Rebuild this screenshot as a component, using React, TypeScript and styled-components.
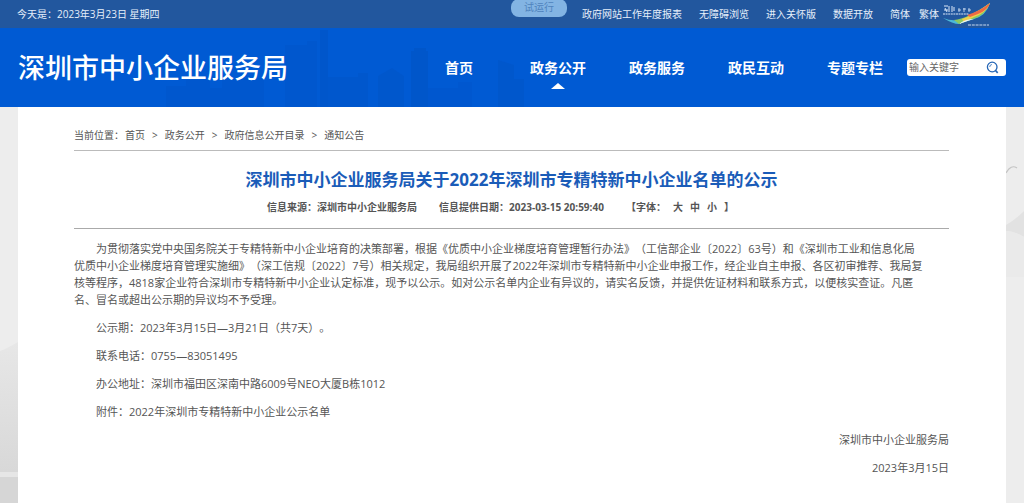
import React from "react";
import styled, { createGlobalStyle } from "styled-components";

const GlobalStyle = createGlobalStyle`
  * { box-sizing: border-box; }
  body {
    margin: 0;
    background: #ededed;
    color: #555;
    font-family: "Open Sans", "Noto Sans CJK SC", sans-serif;
    font-size: 11px;
    line-height: 17px;
    text-spacing-trim: space-all;
  }
  a { color: inherit; text-decoration: none; }
  p, h1 { margin: 0; }
`;

const Page = styled.div`
  display: flex;
  flex-direction: column;
  min-height: 100vh;
`;

const TopBar = styled.div`
  display: flex;
  align-items: center;
  justify-content: space-between;
  height: 28px;
  padding: 0 33px 0 17px;
  background: #22579e;
  color: #e6effa;
  font-size: 10px;
  white-space: nowrap;
`;

const TopLinks = styled.nav`
  display: flex;
  align-items: center;
  gap: 17px;
`;

const TrialBadge = styled.span`
  align-self: flex-start;
  height: 18px;
  width: 56px;
  margin: -3px -2px 0 0;
  border-radius: 8px;
  background: #83b4e3;
  color: #4f83bd;
  text-align: center;
`;

const LangLinks = styled.div`
  display: flex;
  align-items: center;
  gap: 9px;
`;

const CityLogo = styled.svg`
  display: block;
  width: 49px;
  height: 24px;
  margin-left: -6px;
`;

const Header = styled.header`
  position: relative;
  display: flex;
  align-items: center;
  justify-content: space-between;
  height: 79px;
  padding: 0 18px;
  background: #005ad3;
  color: #fff;
  white-space: nowrap;
`;

const Skyline = styled.svg`
  position: absolute;
  left: 160px;
  bottom: 0;
  width: 410px;
  height: 79px;
`;

const SiteName = styled.a`
  position: relative;
  font-size: 27px;
  font-weight: 500;
  line-height: 40px;
`;

const HeaderRight = styled.div`
  position: relative;
  display: flex;
  align-items: center;
  gap: 24px;
`;

const MainNav = styled.nav`
  display: flex;
  gap: 43px;
`;

const NavLink = styled.a<{ $active?: boolean }>`
  position: relative;
  min-width: 56px;
  text-align: center;
  font-size: 14px;
  font-weight: 700;
  line-height: 20px;

  &::after {
    content: "";
    display: ${(p) => (p.$active ? "block" : "none")};
    position: absolute;
    left: 50%;
    top: 25px;
    margin-left: -7px;
    border: solid transparent;
    border-width: 0 7px 6px;
    border-bottom-color: #fff;
  }
`;

const SearchBox = styled.form`
  display: flex;
  align-items: center;
  width: 99px;
  height: 17px;
  border-radius: 3px;
  background: #fff;
`;

const SearchInput = styled.input`
  flex: 1;
  min-width: 0;
  height: 17px;
  padding: 0 0 0 2px;
  border: 0;
  outline: 0;
  background: transparent;
  color: #555;
  font: inherit;
  font-size: 10px;

  &::placeholder { color: #666; opacity: 1; }
`;

const SearchButton = styled.button`
  display: flex;
  align-items: center;
  justify-content: center;
  width: 28px;
  height: 17px;
  padding: 0;
  border: 0;
  background: transparent;
`;

const Body = styled.div`
  display: grid;
  grid-template-columns: 18px minmax(0, 1fr) 18px;
  flex: 1;
`;

const Gutter = styled.svg`
  display: block;
  width: 18px;
  height: 396px;
`;

const Panel = styled.main`
  padding: 20px 57px 18px 56px;
  background: #fff;
`;

const Breadcrumb = styled.nav`
  display: flex;
  gap: 7px;
  padding-bottom: 6px;
  border-bottom: 1px solid #bbb;
  font-size: 10px;
`;

const CrumbLabel = styled.span`
  margin-right: -6px;
`;

const ArticleHead = styled.header`
  padding: 17px 0 12px;
  border-bottom: 1px solid #aaa;
`;

const Title = styled.h1`
  color: #1a5cb8;
  font-size: 17px;
  font-weight: 700;
  line-height: 24px;
  text-align: center;
`;

const Meta = styled.div`
  display: flex;
  justify-content: center;
  gap: 22px;
  padding: 7px 22px 0 0;
  font-size: 10px;
  font-weight: 700;
`;

const FontSizes = styled.span`
  display: flex;
  gap: 7px;
`;

const SizeButton = styled.button`
  padding: 0;
  border: 0;
  background: transparent;
  color: inherit;
  font: inherit;
`;

const Article = styled.article`
  display: flex;
  flex-direction: column;
  gap: 11px;
  padding-top: 11px;
`;

const Paragraph = styled.p`
  text-indent: 2em;
`;

const Signature = styled.p`
  text-align: right;
`;

const NAV = ["首页", "政务公开", "政务服务", "政民互动", "专题专栏"];
const TOP_LINKS = ["政府网站工作年度报表", "无障碍浏览", "进入关怀版", "数据开放"];
const CRUMBS = ["首页", "政务公开", "政府信息公开目录", "通知公告"];

export default function App() {
  return (
    <Page>
      <GlobalStyle />
      <TopBar>
        <span>今天是：2023年3月23日 星期四</span>
        <TopLinks>
          <TrialBadge>试运行</TrialBadge>
          {TOP_LINKS.map((t) => (
            <a href="#" key={t}>{t}</a>
          ))}
          <LangLinks>
            <a href="#">简体</a>
            <a href="#">繁体</a>
            <a href="#" aria-label="深圳政府在线">
              <CityLogo viewBox="0 0 49 24" aria-hidden="true">
                <path d="M1 16 Q11 20 20 17 Q29 14 48 1 Q44 14 32 17 Q25 19 17 22 Q11 22 1 16Z" fill="#4bb9d8" />
                <path d="M12 18 Q25 17 48 1 Q43 14 31 17 L17 22Z" fill="#8cc861" />
                <path d="M20 17 Q32 13 48 1 Q44 11 32 15 L22 20Z" fill="#f2cf4a" />
                <path d="M25 13 Q38 9 48 1 Q46 8 36 12 L28 15Z" fill="#ee6a45" />
                <path d="M17 22 Q23 17 32 17 Q25 19 17 22Z" fill="#e8f3ff" />
                <g stroke="#dbe8f8" fill="none">
                  <path d="M2 4h4M3 6l2 4M7 4v6M10 4v6M12 5v4M2 8h4" />
                  <path d="M16 8h3M17 6v4M21 7h3M22 6v4M26 8h3M27 6v4" strokeWidth="0.8" />
                  <path d="M1 12h26" strokeDasharray="2 0.6" />
                  <path d="M26 23h21" strokeWidth="0.9" strokeDasharray="3 0.8" />
                </g>
              </CityLogo>
            </a>
          </LangLinks>
        </TopLinks>
      </TopBar>

      <Header>
        <Skyline viewBox="0 0 410 79" aria-hidden="true">
          <g fill="#0054c6">
            <path d="M6 79V58h20V52h24v8h12V50h42v29Z" opacity=".35" />
            <path d="M125 79V17h22v-4h10v66Z" opacity=".35" />
            <path d="M160 79V2h8v77Z" opacity=".6" />
            <path d="M168 79V49h30v-4h10v34Z" opacity=".45" />
            <path d="M218 79V48l14-8 12 8v31Z" opacity=".5" />
            <path d="M251 79V23h3v-3h12v3h2v56Z" opacity=".7" />
            <path d="M268 79V60h30v-6h14v25Z" opacity=".3" />
            <path d="M338 79V32l16 5v14h10v28Z" opacity=".5" />
          </g>
        </Skyline>
        <SiteName href="#">深圳市中小企业服务局</SiteName>
        <HeaderRight>
          <MainNav>
            {NAV.map((t) => (
              <NavLink href="#" key={t} $active={t === "政务公开"}>{t}</NavLink>
            ))}
          </MainNav>
          <SearchBox onSubmit={(e) => e.preventDefault()}>
            <SearchInput type="text" placeholder="输入关键字" aria-label="输入关键字" />
            <SearchButton type="submit" aria-label="搜索">
              <svg width="13" height="13" viewBox="0 0 13 13" fill="none" stroke="#2465b5">
                <circle cx="6.2" cy="6" r="4.8" strokeWidth="1.3" />
                <path d="M9.5 9.5l2.2 2.3" strokeWidth="1.7" />
                <path d="M3.7 6a2.5 2.5 0 0 1 2.2-2.5" strokeWidth=".8" />
              </svg>
            </SearchButton>
          </SearchBox>
        </HeaderRight>
      </Header>

      <Body>
        <Gutter viewBox="0 0 18 396" aria-hidden="true">
          <defs>
            <linearGradient id="hill" x1="0" y1="0" x2="0" y2="1">
              <stop offset="0" stopColor="#e7e7e7" />
              <stop offset="1" stopColor="#d8d8d8" />
            </linearGradient>
          </defs>
          <path d="M0 244Q6 242 18 235V365H0Z" fill="url(#hill)" />
          <path d="M0 365h18v5H0Z" fill="#e6e6e6" />
          <path d="M0 370h18v26H0Z" fill="#d6d6d6" />
        </Gutter>
        <Panel>
          <Breadcrumb aria-label="当前位置">
            <CrumbLabel>当前位置：</CrumbLabel>
            {CRUMBS.map((t, i) => (
              <React.Fragment key={t}>
                {i > 0 && <span>&gt;</span>}
                <a href="#">{t}</a>
              </React.Fragment>
            ))}
          </Breadcrumb>
          <ArticleHead>
            <Title>深圳市中小企业服务局关于2022年深圳市专精特新中小企业名单的公示</Title>
            <Meta>
              <span>信息来源：深圳市中小企业服务局</span>
              <span>信息提供日期：2023-03-15 20:59:40</span>
              <FontSizes>
                <span>【字体：</span>
                <SizeButton type="button">大</SizeButton>
                <SizeButton type="button">中</SizeButton>
                <SizeButton type="button">小</SizeButton>
                <span>】</span>
              </FontSizes>
            </Meta>
          </ArticleHead>
          <Article>
            <Paragraph>
              为贯彻落实党中央国务院关于专精特新中小企业培育的决策部署，根据《优质中小企业梯度培育管理暂行办法》（工信部企业〔2022〕63号）和《深圳市工业和信息化局
              <br />
              优质中小企业梯度培育管理实施细》（深工信规〔2022〕7号）相关规定，我局组织开展了2022年深圳市专精特新中小企业申报工作，经企业自主申报、各区初审推荐、我局复
              <br />
              核等程序，4818家企业符合深圳市专精特新中小企业认定标准，现予以公示。如对公示名单内企业有异议的，请实名反馈，并提供佐证材料和联系方式，以便核实查证。凡匿
              <br />
              名、冒名或超出公示期的异议均不予受理。
            </Paragraph>
            <Paragraph>公示期：2023年3月15日—3月21日（共7天）。</Paragraph>
            <Paragraph>联系电话：0755—83051495</Paragraph>
            <Paragraph>办公地址：深圳市福田区深南中路6009号NEO大厦B栋1012</Paragraph>
            <Paragraph>附件：2022年深圳市专精特新中小企业公示名单</Paragraph>
            <Signature>深圳市中小企业服务局</Signature>
            <Signature>2023年3月15日</Signature>
          </Article>
        </Panel>
        <Gutter viewBox="0 0 18 396" aria-hidden="true">
          <path d="M0 66Q5 57 11 61" fill="none" stroke="#c4c4c4" strokeWidth="1.2" />
          <path d="M0 118Q8 114 18 104V130Q8 124 0 124Z" fill="#e2e2e2" />
          <path d="M0 124Q8 124 18 130V170H0Z" fill="#eaeaea" />
        </Gutter>
      </Body>
    </Page>
  );
}
